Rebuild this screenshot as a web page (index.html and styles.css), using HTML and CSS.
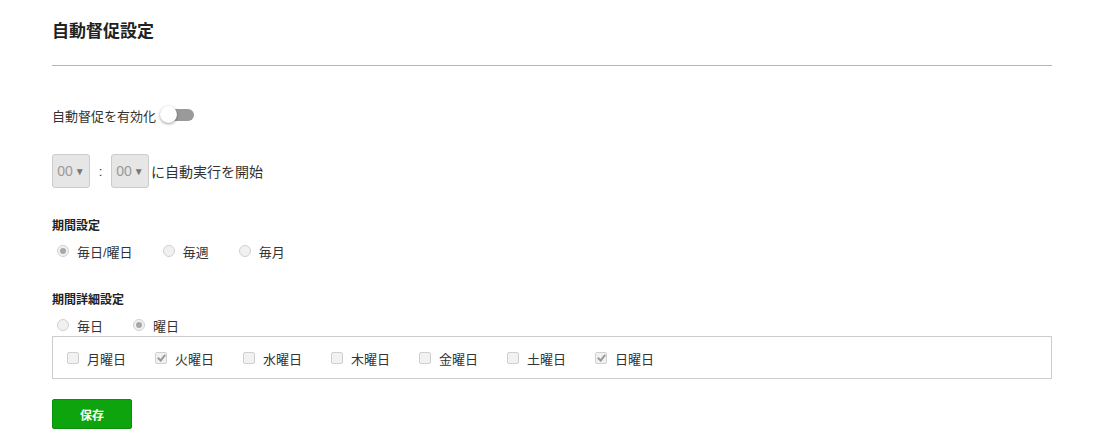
FILE: index.html
```html
<!DOCTYPE html>
<html>
	<head>
		<meta charset='utf-8' />
		<title>自動督促設定</title>
		<link rel="stylesheet" href="styles.css">
	</head>
	<body>
		<div class='panel'>
			<h2 class='title'>自動督促設定</h2>
			<div class='line'></div>

			<div class='row toggleRow'>
				<span>自動督促を有効化</span>
				<span class='switch'><span class='knob'></span></span>
			</div>

			<div class='row timeRow'>
				<span class='sel'>00 <i>▼</i></span>
				<span class='colon'>:</span>
				<span class='sel'>00 <i>▼</i></span>
				<span class='after'>に自動実行を開始</span>
			</div>

			<div class='head'>期間設定</div>
			<div class='radios'>
				<label><span class='radio on'></span>毎日/曜日</label>
				<label><span class='radio'></span>毎週</label>
				<label><span class='radio'></span>毎月</label>
			</div>

			<div class='head head2'>期間詳細設定</div>
			<div class='radios'>
				<label><span class='radio'></span>毎日</label>
				<label><span class='radio on'></span>曜日</label>
			</div>
			<div class='days'>
				<label><span class='check'></span>月曜日</label>
				<label><span class='check on'></span>火曜日</label>
				<label><span class='check'></span>水曜日</label>
				<label><span class='check'></span>木曜日</label>
				<label><span class='check'></span>金曜日</label>
				<label><span class='check'></span>土曜日</label>
				<label><span class='check on'></span>日曜日</label>
			</div>

			<button class='save'>保存</button>
		</div>
	</body>
</html>
```
FILE: styles.css
```css
body {
	margin: 0;
	background: #fff;
	color: #333;
	font-size: 13px;
	font-family: "Liberation Sans", "Noto Sans CJK JP", sans-serif;
}

.panel {
	width: 1000px;
	padding: 20px 52px;
}

.title {
	margin: 0;
	font-size: 17px;
	line-height: 24px;
	font-weight: bold;
	color: #222;
}

.line {
	margin-top: 21px;
	border-top: 1px solid #b5b5b5;
}

.row {
	display: flex;
	align-items: center;
}

.toggleRow {
	margin-top: 39px;
	height: 20px;
}

.switch {
	position: relative;
	display: inline-block;
	width: 30px;
	height: 12px;
	margin-left: 8px;
	border-radius: 6px;
	background: #9a9a9a;
}

.switch .knob {
	position: absolute;
	left: -4px;
	top: -3px;
	width: 17px;
	height: 17px;
	border-radius: 50%;
	background: #fff;
	box-shadow: 0 1px 3px rgba(0, 0, 0, 0.4);
}

.timeRow {
	margin-top: 29px;
	height: 34px;
}

.sel {
	display: flex;
	align-items: center;
	justify-content: center;
	box-sizing: border-box;
	width: 38px;
	height: 34px;
	background: #e6e6e6;
	border: 1px solid #ccc;
	border-radius: 3px;
	color: #999;
	font-size: 14px;
}

.sel i {
	font-style: normal;
	font-size: 10px;
	margin-left: 2px;
	color: #777;
}

.colon {
	width: 21px;
	text-align: center;
}

.after {
	margin-left: 2px;
	font-size: 14px;
}

.head {
	margin-top: 29px;
	font-size: 12px;
	font-weight: bold;
	line-height: 18px;
	color: #222;
}

.head2 {
	margin-top: 31px;
}

.radios {
	display: flex;
	margin-top: 7px;
	height: 18px;
	align-items: center;
	font-size: 13px;
}

.radios label {
	display: flex;
	align-items: center;
	margin-right: 25px;
}

.radio {
	display: inline-block;
	box-sizing: border-box;
	width: 12px;
	height: 12px;
	margin: 0 8px 0 5px;
	border: 1px solid #d0d0d0;
	border-radius: 50%;
	background: #f1f1f1;
	position: relative;
}

.radio.on::after {
	content: "";
	position: absolute;
	left: 2px;
	top: 2px;
	width: 6px;
	height: 6px;
	border-radius: 50%;
	background: #a8a8a8;
}

.days {
	display: flex;
	align-items: center;
	margin-top: 2px;
	height: 41px;
	border: 1px solid #ccc;
	padding-left: 14px;
	font-size: 13px;
}

.days label {
	display: flex;
	align-items: center;
	width: 88px;
	padding-top: 1px;
}

.check {
	display: inline-block;
	position: relative;
	box-sizing: border-box;
	width: 12px;
	height: 12px;
	margin-right: 8px;
	border: 1px solid #d0d0d0;
	border-radius: 2px;
	background: #f1f1f1;
}

.check.on::after {
	content: "";
	position: absolute;
	left: 3px;
	top: 0px;
	width: 3px;
	height: 6px;
	border: solid #9a9a9a;
	border-width: 0 2px 2px 0;
	transform: rotate(40deg);
}

.save {
	display: block;
	margin-top: 20px;
	width: 80px;
	height: 30px;
	background: #0ea40e;
	border: 1px solid #0b8f0b;
	border-radius: 2px;
	color: #fff;
	font-size: 12px;
	font-weight: bold;
	font-family: "Liberation Sans", "Noto Sans CJK JP", sans-serif;
}
```
